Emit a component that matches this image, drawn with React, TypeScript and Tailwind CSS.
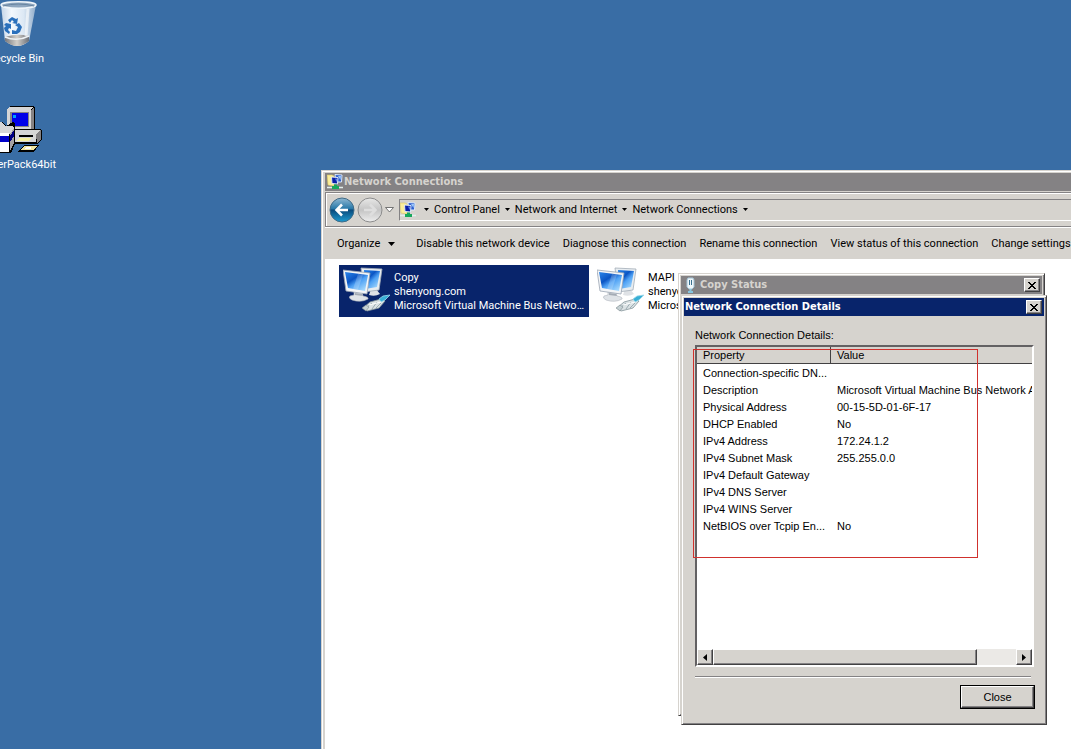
import type { ReactNode } from 'react';

const UI_FONT = "font-['Roboto','Liberation_Sans',sans-serif] text-[11px] leading-[14px]";
const DIALOG_FONT = "font-['Liberation_Sans',sans-serif] text-[11px] leading-[17px]";
const TITLE_FONT = "font-['DejaVu_Sans_Condensed','DejaVu_Sans',sans-serif] text-[11px] leading-[18px] font-bold";

const WINDOW_FRAME =
  'border border-t-[#d6d3ce] border-l-[#d6d3ce] border-r-[#424142] border-b-[#424142] bg-[#d6d3ce] p-[2px] shadow-[inset_1px_1px_0_#ffffff,inset_-1px_-1px_0_#848284]';
const RAISED =
  'border border-t-white border-l-white border-r-[#424142] border-b-[#424142] bg-[#d6d3ce] shadow-[inset_-1px_-1px_0_#848284]';

const COMMANDS = [
  'Disable this network device',
  'Diagnose this connection',
  'Rename this connection',
  'View status of this connection',
  'Change settings of this connection',
];

const CRUMBS = ['Control Panel', 'Network and Internet', 'Network Connections'];

const DETAILS = [
  { property: 'Connection-specific DN...', value: '' },
  { property: 'Description', value: 'Microsoft Virtual Machine Bus Network Adapter' },
  { property: 'Physical Address', value: '00-15-5D-01-6F-17' },
  { property: 'DHCP Enabled', value: 'No' },
  { property: 'IPv4 Address', value: '172.24.1.2' },
  { property: 'IPv4 Subnet Mask', value: '255.255.0.0' },
  { property: 'IPv4 Default Gateway', value: '' },
  { property: 'IPv4 DNS Server', value: '' },
  { property: 'IPv4 WINS Server', value: '' },
  { property: 'NetBIOS over Tcpip En...', value: 'No' },
];

const RecycleBinIcon = () => (
  <svg aria-hidden="true" className="h-12 w-12" viewBox="0 0 48 48">
    <defs>
      <linearGradient id="bin" x1="0" x2="1">
        <stop offset="0" stopColor="#c4d5e8" />
        <stop offset="0.3" stopColor="#f3f8fd" />
        <stop offset="0.65" stopColor="#dce8f4" />
        <stop offset="1" stopColor="#8fabc9" />
      </linearGradient>
      <linearGradient id="binBase" x1="0" x2="1">
        <stop offset="0" stopColor="#77797e" />
        <stop offset="0.5" stopColor="#d3cfc9" />
        <stop offset="1" stopColor="#6b6f78" />
      </linearGradient>
    </defs>
    <path d="M7 5 L11 41 Q24 51 35 41 L42 5 Z" fill="url(#bin)" />
    <path d="M11 37 Q23 33 35 36 L35 41 Q23 51 11 41 Z" fill="url(#binBase)" />
    <path d="M11 37 Q23 42 35 36" fill="none" stroke="#eef2f5" strokeWidth="1.5" />
    <ellipse cx="24.500" cy="5" fill="#8ea6bf" rx="17.500" ry="3.200" stroke="#eff5fa" strokeWidth="1.500" />
    <path d="M9 6 Q24 2 40 6" fill="none" stroke="#66839f" strokeWidth="1" />
    <path d="M34 9 L32 36" stroke="#fff" strokeOpacity="0.6" strokeWidth="3" />
    <g fill="#2a70bc">
      <path d="M14 20 L18 17 L22 19 L24 18 L23 24 L18 23 L20 22 L18 20 L16 23 Z" />
      <path d="M12 23 L17 24 L17 29 L15 28 L14 30 L16 32 L15 34 L11 31 L10 28 L12 26 L10 25 Z" />
      <path d="M18 30 L22 31 L24 27 L21 25 L25 23 L28 27 L26 32 L23 34 L18 34 Z" />
    </g>
  </svg>
);

const InstallerIcon = () => (
  <svg aria-hidden="true" className="h-12 w-12" shapeRendering="crispEdges" viewBox="0 0 48 48">
    <path d="M13 3 L16 0 L40 0 L41 2 L41 23 L38 26 L13 26 Z" fill="#000" />
    <path d="M13 3 L16 1 L39 1 L37 3 L37 24 L13 24 Z" fill="#d6d6d6" />
    <path d="M37 4 L40 1 L40 22 L37 25 Z" fill="#848284" />
    <path d="M16 6 H35 V21 H16 Z" fill="#848284" />
    <path d="M18 7 H34 V20 H18 Z" fill="#0000e8" />
    <path d="M19 9 H22 V12 H19 Z" fill="#00a0ff" />
    <path d="M13 28 L19 23 H46 L48 25 V34 L43 38 H13 Z" fill="#000" />
    <path d="M13 28 L19 24 H46 L42 28 V36 H13 Z" fill="#d6d6d6" />
    <path d="M42 28 L47 24 V33 L43 37 Z" fill="#848284" />
    <path d="M25 29 H39 V31 H25 Z" fill="#000" />
    <path d="M25 32 H37 L34 35 H23 Z" fill="#f5f0a0" />
    <path d="M27 42 L31 39 H45 L40 46 H24 Z" fill="#000" />
    <path d="M28 42 L31 40 H43 L39 44 H26 Z" fill="#f0e6a0" />
    <path d="M32 41 H37 V43 H31 Z" fill="#fff" />
    <path d="M0 24 L8 16 L12 20 L19 16 L21 18 L21 38 L17 47 H0 Z" fill="#000" />
    <path d="M0 22 L7 16 L11 20 H18 L20 22 L16 28 H0 Z" fill="#d6d6d6" />
    <path d="M0 27 H15 V46 H0 Z" fill="#fff" />
    <path d="M0 30 H15 V36 H0 Z" fill="#0000c8" />
    <path d="M16 28 L20 22 V37 L16 45 Z" fill="#a5a2a5" />
    <path d="M16 30 L20 24 V30 L16 36 Z" fill="#000084" />
  </svg>
);

const NetworkFolderIcon = () => (
  <svg aria-hidden="true" className="h-4 w-4 shrink-0" viewBox="0 0 16 16">
    <path d="M0 13.500 H16" stroke="#e4efec" strokeWidth="1.500" />
    <path d="M0 1 H5 L7 2 V12 L1 11 Z" fill="#fbee9c" stroke="#d8c765" strokeWidth="0.6" />
    <path d="M8 0.500 L15 1 L14.500 8 L9 8 Z" fill="#2c5ed0" stroke="#dbe8f8" strokeWidth="1" />
    <path d="M11 2 L14 2 L13.500 6 Z" fill="#9cc8f8" />
    <path d="M4.500 3 L11 3.500 L10.500 10 L5 9.500 Z" fill="#0c1fa6" stroke="#dbe8f8" strokeWidth="1" />
    <path d="M8 4.500 L10 4.700 L9.600 8 Z" fill="#5d8bf0" />
    <path d="M7 10.500 H10 V12 H12 V15 H5 V12 H7 Z" fill="#18a85c" />
  </svg>
);

const StatusIcon = () => (
  <svg aria-hidden="true" className="h-4 w-4 shrink-0" viewBox="0 0 16 16">
    <path d="M5 1 H10 L11 3 V10 L9 12 H6 L4 10 V3 Z" fill="#eef6fa" stroke="#a4c4d6" />
    <path d="M6.500 3 V8 M8.500 3 V8" stroke="#38708f" />
    <path d="M7.500 12 V15 M5 15 H10" stroke="#85c5de" strokeWidth="2" />
  </svg>
);

const ConnectionIcon = ({ id }: { id: string }) => (
  <svg aria-hidden="true" className="h-12 w-12 shrink-0" viewBox="0 0 48 48">
    <defs>
      <linearGradient id={id} x1="0" x2="0.8" y1="0" y2="1">
        <stop offset="0" stopColor="#2b86ea" />
        <stop offset="0.4" stopColor="#0b55c4" />
        <stop offset="0.6" stopColor="#4da0f4" />
        <stop offset="1" stopColor="#a8dafd" />
      </linearGradient>
    </defs>
    <path d="M28 22 H33 L37 27 Q32 30 26 28 Z" fill="#dfe2e6" />
    <path d="M18 1 L39 2 L36 23 L21 25 Z" fill="#e8edf1" stroke="#a3adb8" strokeWidth="0.8" />
    <path d="M21 3 L37 4 L34 20 L22 22 Z" fill={`url(#${id})`} />
    <path d="M11 24 L19 25 L20 29 Q26 30 25 32 Q18 36 9 33 Q5 31 7 29 L11 28 Z" fill="#dfe3e7" stroke="#b0b6bd" strokeWidth="0.6" />
    <path d="M12 26 L19 27 L20 29 L12 28 Z" fill="#a4abb4" />
    <path d="M0 3 L27 6 L24 27 L3 24 Z" fill="#f3f5f7" stroke="#9ba5b2" strokeWidth="0.8" />
    <path d="M2 5 L25 8 L22 24 L5 21 Z" fill={`url(#${id})`} />
    <path d="M15 7 L20 7.500 L15 22.500 L10 22 Z" fill="#fff" fillOpacity="0.2" />
    <path d="M20 41 L27 35 L38 32 L42 34 L36 41 L24 44 Z" fill="#dce3e5" stroke="#84949b" strokeWidth="0.8" />
    <path d="M36 32 L40 29 L47 28 L42 33 L38 35 Z" fill="#38afd5" stroke="#9ed9eb" strokeWidth="0.8" />
    <path d="M23 41 L29 36 M29 42 L34 35 M33 41 L38 36" stroke="#8c9ea6" strokeWidth="0.8" />
    <path d="M26 38 L38 35" stroke="#fff" />
    <path d="M19 41 L23 38 L26 40 L23 44 Z" fill="#c5d0d3" stroke="#7d8b90" strokeWidth="0.6" />
  </svg>
);

const CloseGlyph = () => (
  <svg aria-hidden="true" className="h-[7px] w-2" shapeRendering="crispEdges" viewBox="0 0 8 7">
    <path
      d="M0 0h2v1h-2z M6 0h2v1h-2z M1 1h2v1h-2z M5 1h2v1h-2z M2 2h4v1h-4z M3 3h2v1h-2z M2 4h4v1h-4z M1 5h2v1h-2z M5 5h2v1h-2z M0 6h2v1h-2z M6 6h2v1h-2z"
      fill="#000"
    />
  </svg>
);

const DownArrow = ({ large = false }: { large?: boolean }) => (
  <svg
    aria-hidden="true"
    className={large ? 'h-1 w-[7px] shrink-0' : 'h-[3px] w-[5px] shrink-0'}
    preserveAspectRatio="none"
    viewBox="0 0 7 4"
  >
    <path d="M0 0 H7 L3.500 4 Z" fill="#000" />
  </svg>
);

const TitleButton = ({ label }: { label: string }) => (
  <button aria-label={label} className={`${RAISED} flex h-[14px] w-4 items-center justify-center`} type="button">
    <CloseGlyph />
  </button>
);

const NavButtons = () => (
  <div className="flex h-7 w-[68px] shrink-0 items-center">
    <button aria-label="Back" type="button">
      <svg aria-hidden="true" className="h-7 w-7" viewBox="0 0 28 28">
        <defs>
          <linearGradient id="back" x2="0" y2="1">
            <stop offset="0" stopColor="#8fb8d2" />
            <stop offset="0.45" stopColor="#2878a8" />
            <stop offset="0.5" stopColor="#0a4a7c" />
            <stop offset="1" stopColor="#1d9bd0" />
          </linearGradient>
        </defs>
        <circle cx="14" cy="14" fill="url(#back)" r="12" stroke="#416b86" />
        <path d="M20 14 H9 M14 8.500 L8.500 14 L14 19.500" fill="none" stroke="#fff" strokeWidth="2.500" />
      </svg>
    </button>
    <button aria-label="Forward" type="button">
      <svg aria-hidden="true" className="h-7 w-7" viewBox="0 0 28 28">
        <defs>
          <linearGradient id="forward" x2="0" y2="1">
            <stop offset="0" stopColor="#e8e8e7" />
            <stop offset="0.5" stopColor="#c4c4c4" />
            <stop offset="1" stopColor="#eeeeee" />
          </linearGradient>
        </defs>
        <circle cx="14" cy="14" fill="url(#forward)" r="12" stroke="#8c8c8c" />
        <path d="M8 14 H19 M14 8.500 L19.500 14 L14 19.500" fill="none" stroke="#dedede" strokeWidth="2.500" />
      </svg>
    </button>
    <button aria-label="Recent pages" className="ml-px" type="button">
      <svg aria-hidden="true" className="h-[6px] w-[9px]" viewBox="0 0 9 6">
        <path d="M0.500 0.500 H8.500 L4.500 5 Z" fill="#fff" stroke="#666" strokeWidth="0.9" />
      </svg>
    </button>
  </div>
);

type DesktopIconProps = { label: string; children: ReactNode };

const DesktopIcon = ({ label, children }: DesktopIconProps) => (
  <div className="flex h-[106px] flex-col items-center gap-1">
    {children}
    <span className="pr-1 whitespace-nowrap text-white">{label}</span>
  </div>
);

type ConnectionProps = { id: string; name: string; selected?: boolean };

const Connection = ({ id, name, selected = false }: ConnectionProps) => (
  <li
    className={`flex h-[52px] w-[250px] shrink-0 gap-[3px] pt-[2px] pr-1 pl-1 ${selected ? 'bg-[#08246b] text-white' : 'text-black'}`}
  >
    <ConnectionIcon id={id} />
    <div className="min-w-0 flex-1 pt-1">
      <div>{name}</div>
      <div>shenyong.com</div>
      <div className="truncate">Microsoft Virtual Machine Bus Network Adapter</div>
    </div>
  </li>
);

const NetworkWindow = () => (
  <section className="absolute top-[170px] right-0 bottom-0 left-[321px] flex flex-col overflow-hidden border-t border-l border-[#d6d3ce] bg-[#d6d3ce] pt-[2px] pl-[3px] shadow-[inset_1px_1px_0_#ffffff]">
    <header className={`${TITLE_FONT} flex h-[18px] shrink-0 items-center gap-px bg-[#848284] pl-[2px] text-[#d6d3ce]`}>
      <NetworkFolderIcon />
      <h1>Network Connections</h1>
    </header>

    <nav className="mt-px flex h-[35px] shrink-0 items-center border-t border-b border-l border-[#848284] pl-[2px] shadow-[inset_1px_1px_0_#ffffff,0_1px_0_#ffffff]">
      <NavButtons />
      <div className="ml-[3px] flex h-[22px] flex-1 items-center border-t border-b border-l border-t-[#848284] border-b-white border-l-[#848284]">
        <NetworkFolderIcon />
        <ol className="ml-[3px] flex items-center whitespace-nowrap">
          {CRUMBS.map((crumb) => (
            <li key={crumb} className="flex items-center">
              <span className="flex w-[15px] justify-center">
                <DownArrow />
              </span>
              <a href="#">{crumb}</a>
            </li>
          ))}
        </ol>
        <span className="flex w-[15px] justify-center">
          <DownArrow />
        </span>
      </div>
    </nav>

    <div className="flex h-8 shrink-0 items-center gap-[13px] pt-[2px] pl-3 whitespace-nowrap">
      <button className="mr-2 flex items-center gap-2" type="button">
        Organize
        <DownArrow large />
      </button>
      {COMMANDS.map((command) => (
        <button key={command} type="button">
          {command}
        </button>
      ))}
    </div>

    <ul className="flex flex-1 gap-1 bg-white pt-[6px] pl-[14px]">
      <Connection id="copy" name="Copy" selected />
      <Connection id="mapi" name="MAPI" />
    </ul>
  </section>
);

const StatusWindow = () => (
  <section className={`${WINDOW_FRAME} absolute top-[273px] left-[678px] h-[443px] w-[367px]`}>
    <header className={`${TITLE_FONT} flex h-[18px] items-center gap-px bg-[#848284] pr-[2px] pl-[2px] text-[#d6d3ce]`}>
      <StatusIcon />
      <h2 className="flex-1">Copy Status</h2>
      <TitleButton label="Close Copy Status" />
    </header>
  </section>
);

const DetailsTable = () => (
  <div className="overflow-hidden border-2 border-t-[#636163] border-r-white border-b-white border-l-[#636163] bg-white">
    <div className="h-[302px] overflow-hidden">
      <table className="w-[420px] table-fixed border-separate border-spacing-0 text-left leading-[15px] whitespace-nowrap">
        <colgroup>
          <col className="w-[134px]" />
          <col />
        </colgroup>
        <thead>
          <tr className="bg-[#d6d3ce]">
            <th className="border-r border-b border-[#424142] pt-px pb-0 pl-[6px] font-normal">Property</th>
            <th className="border-b border-[#424142] pt-px pb-0 pl-[6px] font-normal">Value</th>
          </tr>
        </thead>
        <tbody>
          {DETAILS.map(({ property, value }) => (
            <tr key={property} className="h-[17px]">
              <td className="pt-[2px] pb-0 pl-[6px]">{property}</td>
              <td className="pt-[2px] pb-0 pl-[6px]">{value}</td>
            </tr>
          ))}
        </tbody>
      </table>
    </div>
    <div className="flex h-4 bg-[#ebe9e6]">
      <button aria-label="Scroll left" className={`${RAISED} flex w-4 items-center justify-center`} type="button">
        <svg aria-hidden="true" className="h-[7px] w-1" viewBox="0 0 4 7">
          <path d="M4 0 V7 L0 3.500 Z" />
        </svg>
      </button>
      <div className={`${RAISED} w-[264px]`} />
      <button aria-label="Scroll right" className={`${RAISED} ml-auto flex w-4 items-center justify-center`} type="button">
        <svg aria-hidden="true" className="h-[7px] w-1" viewBox="0 0 4 7">
          <path d="M0 0 V7 L4 3.500 Z" />
        </svg>
      </button>
    </div>
  </div>
);

const DetailsDialog = () => (
  <section className={`${WINDOW_FRAME} ${DIALOG_FONT} absolute top-[295px] left-[681px] w-[366px]`}>
    <header className={`${TITLE_FONT} flex h-[18px] items-center bg-[#08246b] pr-[2px] pl-px text-white`}>
      <h2 className="flex-1">Network Connection Details</h2>
      <TitleButton label="Close Network Connection Details" />
    </header>

    <div className="pt-[11px] pr-[9px] pb-[13px] pl-[11px]">
      <p className="mb-px">Network Connection Details:</p>
      <div className="mr-px">
        <DetailsTable />
      </div>
      <hr className="mt-[9px] mr-1 border-t border-[#848284] shadow-[0_1px_0_#ffffff]" />
      <div className="mt-2 flex justify-end">
        <button className="h-6 w-[75px] border border-black bg-black" type="button">
          <span className={`${RAISED} flex h-full items-center justify-center`}>Close</span>
        </button>
      </div>
    </div>

    {/* highlight around the address rows */}
    <div className="pointer-events-none absolute top-[53px] left-[11px] h-[209px] w-[285px] border border-[#d0312d]" />
  </section>
);

export default function App() {
  return (
    <main className={`${UI_FONT} relative min-h-screen overflow-hidden bg-[#396da5] text-black`}>
      <div className="absolute top-0 left-[-20px] w-[76px]">
        <DesktopIcon label="Recycle Bin">
          <RecycleBinIcon />
        </DesktopIcon>
        <DesktopIcon label="PowerPack64bit">
          <InstallerIcon />
        </DesktopIcon>
      </div>
      <NetworkWindow />
      <StatusWindow />
      <DetailsDialog />
    </main>
  );
}
